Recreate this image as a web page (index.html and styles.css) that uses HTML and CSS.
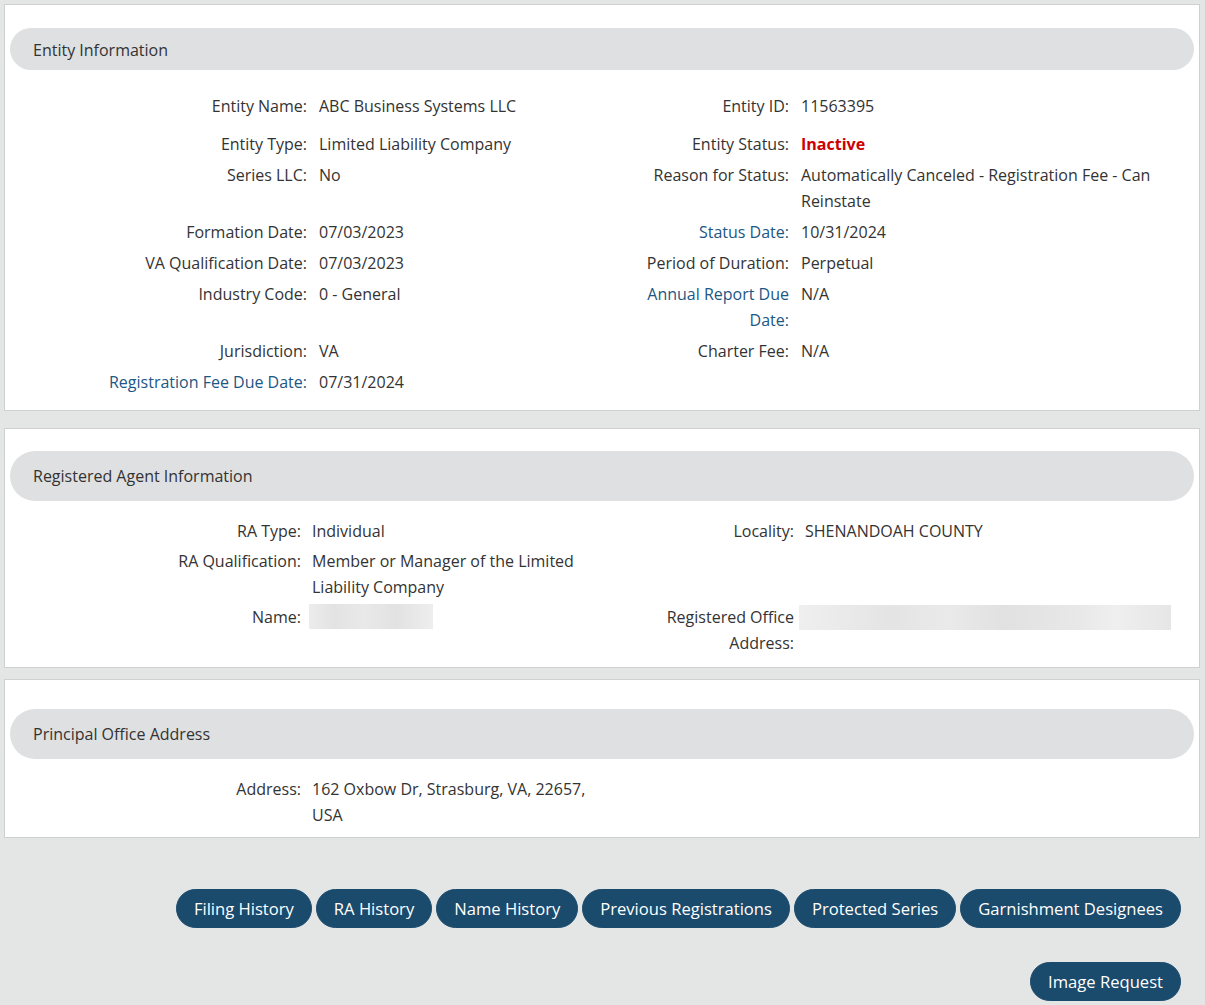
FILE: index.html
```html
<!DOCTYPE html>
<html lang="en">
<head>
<meta charset="utf-8">
<title>Entity Information</title>
<link rel="stylesheet" href="styles.css">
</head>
<body>
<div class="page">
  <section class="panel panel-entity">
    <div class="panel-head head-sm">Entity Information</div>
    <div class="panel-body rows-entity">
      <div class="row row-first">
        <div class="lbl">Entity Name:</div><div class="val">ABC Business Systems LLC</div>
        <div class="lbl">Entity ID:</div><div class="val">11563395</div>
      </div>
      <div class="row">
        <div class="lbl">Entity Type:</div><div class="val">Limited Liability Company</div>
        <div class="lbl">Entity Status:</div><div class="val status">Inactive</div>
      </div>
      <div class="row">
        <div class="lbl">Series LLC:</div><div class="val">No</div>
        <div class="lbl">Reason for Status:</div><div class="val">Automatically Canceled - Registration Fee - Can Reinstate</div>
      </div>
      <div class="row">
        <div class="lbl">Formation Date:</div><div class="val">07/03/2023</div>
        <div class="lbl link">Status Date:</div><div class="val">10/31/2024</div>
      </div>
      <div class="row">
        <div class="lbl">VA Qualification Date:</div><div class="val">07/03/2023</div>
        <div class="lbl">Period of Duration:</div><div class="val">Perpetual</div>
      </div>
      <div class="row">
        <div class="lbl">Industry Code:</div><div class="val">0 - General</div>
        <div class="lbl link">Annual Report Due Date:</div><div class="val">N/A</div>
      </div>
      <div class="row">
        <div class="lbl">Jurisdiction:</div><div class="val">VA</div>
        <div class="lbl">Charter Fee:</div><div class="val">N/A</div>
      </div>
      <div class="row">
        <div class="lbl link">Registration Fee Due Date:</div><div class="val">07/31/2024</div>
        <div class="lbl"></div><div class="val"></div>
      </div>
    </div>
  </section>

  <section class="panel panel-agent">
    <div class="panel-head">Registered Agent Information</div>
    <div class="panel-body rows-agent">
      <div class="row">
        <div class="lbl">RA Type:</div><div class="val">Individual</div>
        <div class="lbl">Locality:</div><div class="val">SHENANDOAH COUNTY</div>
      </div>
      <div class="row">
        <div class="lbl">RA Qualification:</div><div class="val">Member or Manager of the Limited Liability Company</div>
        <div class="lbl"></div><div class="val"></div>
      </div>
      <div class="row">
        <div class="lbl">Name:</div><div class="val"><span class="blur blur-name"></span></div>
        <div class="lbl">Registered Office Address:</div><div class="val"><span class="blur blur-addr"></span></div>
      </div>
    </div>
  </section>

  <section class="panel panel-office">
    <div class="panel-head">Principal Office Address</div>
    <div class="panel-body rows-agent">
      <div class="row">
        <div class="lbl">Address:</div><div class="val">162 Oxbow Dr, Strasburg, VA, 22657, USA</div>
        <div class="lbl"></div><div class="val"></div>
      </div>
    </div>
  </section>

  <div class="actions">
    <div class="btn-row">
      <button class="btn">Filing History</button>
      <button class="btn">RA History</button>
      <button class="btn">Name History</button>
      <button class="btn">Previous Registrations</button>
      <button class="btn">Protected Series</button>
      <button class="btn">Garnishment Designees</button>
    </div>
    <div class="btn-row row-image">
      <button class="btn">Image Request</button>
    </div>
  </div>
</div>
</body>
</html>
```

FILE: styles.css
```css
* { box-sizing: border-box; }

html, body {
  margin: 0;
  padding: 0;
  background: #e4e5e5;
}

body {
  font-family: "Open Sans", "Noto Sans", "Liberation Sans", sans-serif;
  font-size: 16px;
  line-height: 26px;
  color: #333333;
}

.page {
  padding: 4px 5px 0 4px;
}

.panel {
  background: #ffffff;
  border: 1px solid #cfd0d0;
}

.panel-entity {
  padding: 23px 5px 15px 5px;
}

.panel-agent {
  margin-top: 17px;
  padding: 22px 5px 11px 5px;
}

.panel-office {
  margin-top: 11px;
  padding: 29px 5px 9px 5px;
}

.panel-head {
  background: #dfe0e1;
  border-radius: 25px;
  height: 50px;
  padding-left: 23px;
  display: flex;
  align-items: center;
  color: #333333;
}

.panel-head.head-sm {
  height: 42px;
  border-radius: 21px;
  padding-top: 1px;
}

.panel-body {
  display: flex;
  flex-direction: column;
}

.rows-entity {
  margin-top: 23px;
  gap: 5px;
}

.rows-entity .row {
  display: grid;
  grid-template-columns: 297px 310px 148px 390px;
  column-gap: 12px;
}

.rows-entity .row-first {
  margin-bottom: 7px;
}

.rows-agent {
  margin-top: 17px;
  gap: 4px;
}

.rows-agent .row {
  display: grid;
  grid-template-columns: 291px 300px 171px 380px;
  column-gap: 11px;
}

.lbl {
  text-align: right;
}

.lbl.link {
  color: #1c5785;
}

.val.status {
  color: #cc0000;
  font-weight: 700;
}

.blur {
  display: block;
  height: 25px;
  margin-left: -3px;
  background: linear-gradient(90deg, #ececec 0%, #e3e3e3 20%, #e9e9e9 45%, #e2e2e2 70%, #eeeeee 100%);
}

.blur-name {
  width: 124px;
}

.blur-addr {
  width: 372px;
  margin-left: -6px;
  margin-top: 1px;
  background: linear-gradient(90deg, #efefef 0%, #e4e4e4 25%, #eaeaea 40%, #e1e1e1 55%, #e8e8e8 75%, #efefef 85%, #e6e6e6 100%);
}

.actions {
  margin-top: 51px;
  padding-right: 19px;
  display: flex;
  flex-direction: column;
  gap: 34px;
}

.btn-row {
  display: flex;
  justify-content: flex-end;
  gap: 4px;
}

.btn {
  font-family: "Open Sans", "Noto Sans", "Liberation Sans", sans-serif;
  font-size: 16.6px;
  line-height: 23px;
  height: 39px;
  padding: 0 17px;
  color: #ffffff;
  background: #1a4a6c;
  border: 1px solid #1a4a6c;
  border-radius: 20px;
  cursor: pointer;
}
```
